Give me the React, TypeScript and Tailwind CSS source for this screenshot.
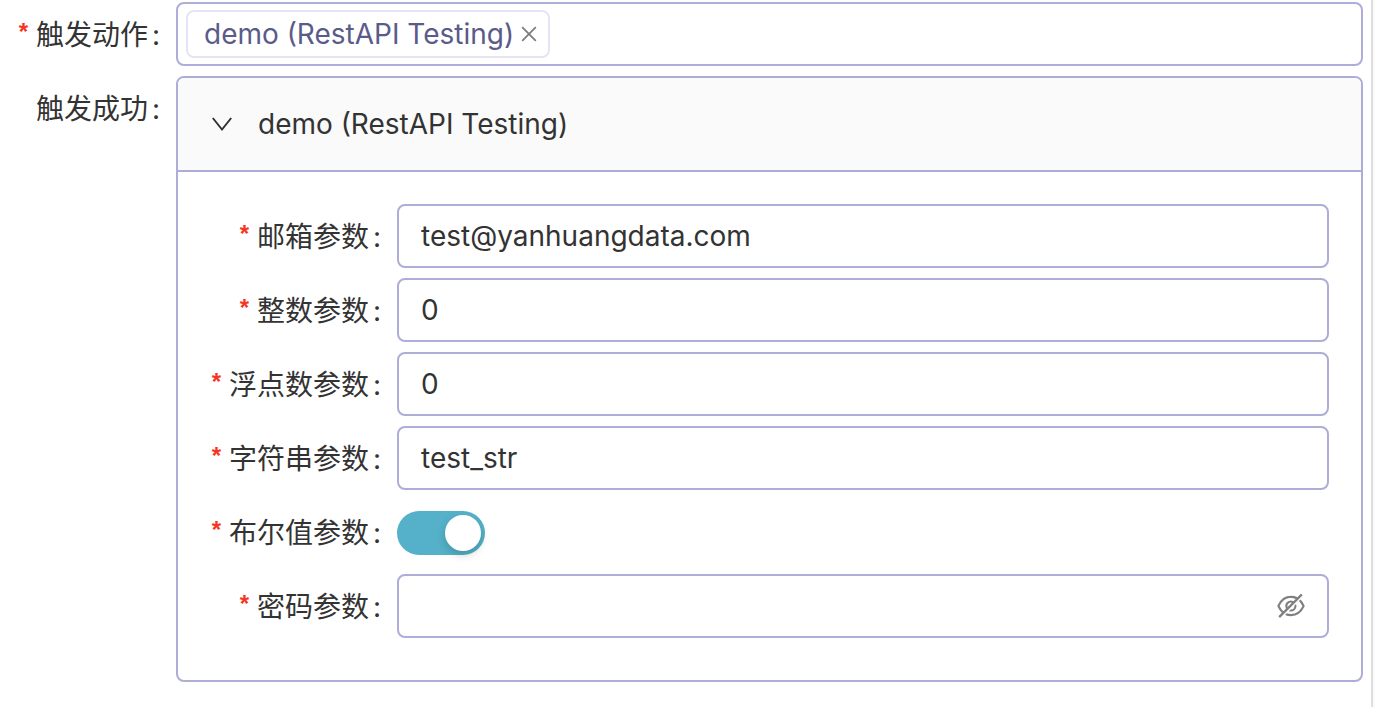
import { useState } from "react";
import type { ReactNode } from "react";
import { AiOutlineClose, AiOutlineEyeInvisible } from "react-icons/ai";

type LabelProps = { htmlFor: string; required?: boolean; children: string };

function FieldLabel({ htmlFor, required = false, children }: LabelProps) {
  return (
    <label htmlFor={htmlFor} className="flex h-16 items-center justify-end pt-0.5 whitespace-nowrap">
      {required && <span className="mr-2 pb-1.5 font-['Liberation_Sans'] text-2xl font-bold text-[#f5351f]">*</span>}
      <span>{children}</span>
      <span className="ml-1 w-6">:</span>
    </label>
  );
}

function ParamRow({ id, label, children }: { id: string; label: string; children: ReactNode }) {
  return (
    <div className="grid grid-cols-[187px_minmax(0,1fr)] items-center">
      <FieldLabel htmlFor={id} required>
        {label}
      </FieldLabel>
      {children}
    </div>
  );
}

const inputClass =
  "h-16 w-full min-w-0 rounded-lg border-2 border-[#adadd8] bg-white px-[22px] text-[#333333] outline-none";

const textParams = [
  { id: "email", label: "邮箱参数", type: "email", value: "test@yanhuangdata.com" },
  { id: "integer", label: "整数参数", type: "text", value: "0" },
  { id: "float", label: "浮点数参数", type: "text", value: "0" },
  { id: "string", label: "字符串参数", type: "text", value: "test_str" },
];

export default function App() {
  const [selected, setSelected] = useState(true);
  const [open, setOpen] = useState(true);
  const [visible, setVisible] = useState(false);

  return (
    <div className="min-h-screen bg-[#fafafa] pr-0.5 font-[Inter,'Noto_Sans_CJK_SC',sans-serif] text-[28px] leading-10 text-[#333333]">
      <form className="flex min-h-screen flex-col gap-2.5 border-r-2 border-[#dedede] bg-white pt-0.5 pr-2">
        <div className="grid grid-cols-[176px_minmax(0,1fr)]">
          <FieldLabel htmlFor="action" required>
            触发动作
          </FieldLabel>
          <div className="flex h-16 items-center rounded-lg border-2 border-[#adadd8] px-2">
            {selected && (
              <span className="flex h-12 shrink-0 items-center gap-1 rounded-lg border-2 border-[#e6e4f3] pr-2 pl-4 text-[#5b5b89]">
                demo (RestAPI Testing)
                <button type="button" aria-label="移除" onClick={() => setSelected(false)}>
                  <AiOutlineClose className="size-[22px] text-[#7d7d7d]" />
                </button>
              </span>
            )}
            <input id="action" type="text" className="min-w-0 flex-1 bg-transparent px-2 outline-none" />
          </div>
        </div>

        <div className="grid grid-cols-[176px_minmax(0,1fr)]">
          <FieldLabel htmlFor="success">触发成功</FieldLabel>
          <section className="overflow-hidden rounded-lg border-2 border-[#adadd8]">
            <button
              id="success"
              type="button"
              aria-expanded={open}
              onClick={() => setOpen(!open)}
              className="flex h-[94px] w-full items-center gap-6 border-b-2 border-[#adadd8] bg-[#fafafa] px-8 text-left"
            >
              <svg viewBox="0 0 24 24" fill="none" stroke="currentColor" strokeWidth="2" className="size-6">
                <path d="M2.8 6 12 17.5 21.2 6" />
              </svg>
              demo (RestAPI Testing)
            </button>
            {open && (
              <div className="flex flex-col gap-2.5 px-8 pt-8 pb-[42px]">
                {textParams.map((p) => (
                  <ParamRow key={p.id} id={p.id} label={p.label}>
                    <input id={p.id} type={p.type} defaultValue={p.value} className={inputClass} />
                  </ParamRow>
                ))}
                <ParamRow id="boolean" label="布尔值参数">
                  <input
                    id="boolean"
                    type="checkbox"
                    role="switch"
                    defaultChecked
                    className="mt-0.5 flex h-11 w-[88px] cursor-pointer appearance-none items-center rounded-full bg-[#bfbfbf] px-1 before:size-9 before:rounded-full before:bg-white before:shadow-[0_4px_8px_rgba(0,35,11,0.2)] checked:justify-end checked:bg-[#54b1c9]"
                  />
                </ParamRow>
                <ParamRow id="password" label="密码参数">
                  <div className="flex h-16 items-center rounded-lg border-2 border-[#adadd8] bg-white pr-5 pl-[22px]">
                    <input
                      id="password"
                      type={visible ? "text" : "password"}
                      className="min-w-0 flex-1 bg-transparent outline-none"
                    />
                    <button type="button" aria-label="显示密码" onClick={() => setVisible(!visible)}>
                      <AiOutlineEyeInvisible className="size-8 text-[#808080]" />
                    </button>
                  </div>
                </ParamRow>
              </div>
            )}
          </section>
        </div>
      </form>
    </div>
  );
}
